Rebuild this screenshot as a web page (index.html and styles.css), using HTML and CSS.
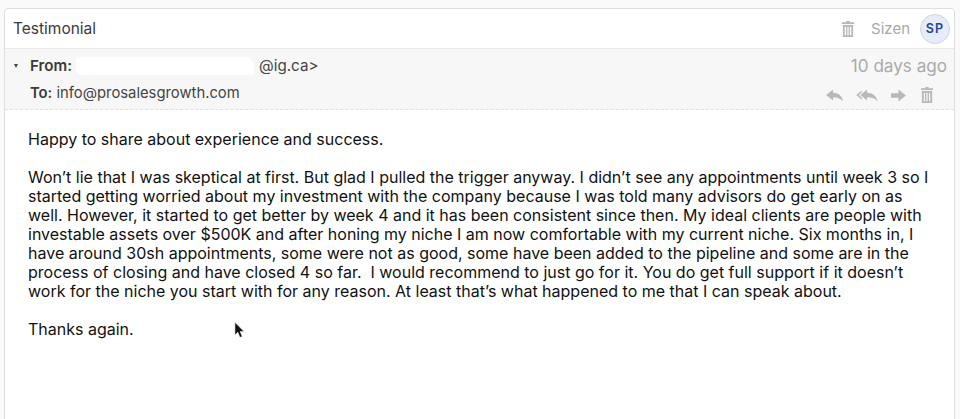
FILE: index.html
```html
<!DOCTYPE html>
<html lang="en">
<head>
<meta charset="utf-8">
<title>Testimonial</title>
<link rel="stylesheet" href="styles.css">
</head>
<body>
<main class="card">
  <header class="subject">
    <h1 class="subject-title">Testimonial</h1>
    <div class="subject-side">
      <svg class="icon icon-trash-lg" viewBox="0 0 14 18" preserveAspectRatio="none"><use href="#trash"/></svg>
      <span class="owner">Sizen</span>
      <span class="avatar">SP</span>
    </div>
  </header>
  <section class="meta">
    <div class="meta-row meta-from">
      <div class="from">
        <span class="caret"></span>
        <b class="label">From:</b>
        <span class="redacted"></span>
        <span class="address">@ig.ca&gt;</span>
      </div>
      <span class="age">10 days ago</span>
    </div>
    <div class="meta-row meta-to">
      <div class="to"><b class="label">To:</b> info@prosalesgrowth.com</div>
      <div class="actions">
        <svg class="icon icon-reply" viewBox="0 0 18 14"><path d="M0 6.500 7.500 0.500V4C13 4 17.500 7 18 13.500 15.500 10.500 12 9 7.500 9V12.500Z"/></svg>
        <svg class="icon icon-replyall" viewBox="0 0 23 14"><path d="M0 6.500 6 1.500V3.400L2.800 6.500 6 9.600V11.500Z"/><path d="M4.500 6.500 11.500 0.500V4C17 4 22 7 23 13.500 20.500 10.500 16.500 9 11.500 9V12.500Z"/></svg>
        <svg class="icon icon-forward" viewBox="0 0 16 14"><path d="M0 4.500H8V0.500L16 7 8 13.500V9.500H0Z"/></svg>
        <svg class="icon icon-trash" viewBox="0 0 14 18" preserveAspectRatio="none"><use href="#trash"/></svg>
      </div>
    </div>
  </section>
  <article class="body">
    <p>Happy to share about experience and success.</p>
    <p>Won’t lie that I was skeptical at first. But glad I pulled the trigger anyway. I didn’t see any appointments until week 3 so I<br>
    started getting worried about my investment with the company because I was told many advisors do get early on as<br>
    well. However, it started to get better by week 4 and it has been consistent since then. My ideal clients are people with<br>
    investable assets over $500K and after honing my niche I am now comfortable with my current niche. Six months in, I<br>
    have around 30sh appointments, some were not as good, some have been added to the pipeline and some are in the<br>
    process of closing and have closed 4 so far.&nbsp; I would recommend to just go for it. You do get full support if it doesn’t<br>
    work for the niche you start with for any reason. At least that’s what happened to me that I can speak about.</p>
    <p>Thanks again.</p>
  </article>
  <svg class="cursor" viewBox="0 0 12 20"><path d="M1 1V15L4.200 12 6.500 17.500 9 16.500 6.700 11.200H11Z"/></svg>
</main>
<svg class="defs" aria-hidden="true"><defs>
  <g id="trash"><path fill-rule="evenodd" d="M5 0H9V1.500H14V3.500H0V1.500H5ZM1 4.500H13V18H1ZM3.200 6.500V16H4.700V6.500ZM6.250 6.500V16H7.750V6.500ZM9.300 6.500V16H10.800V6.500Z"/></g>
</defs></svg>
</body>
</html>
```
FILE: styles.css
```css
html, body { margin: 0; height: 419px; overflow: hidden; background: #f9f9f9; }
body { padding: 8px 5px 0 4px; box-sizing: border-box; font-family: Inter, "Liberation Sans", sans-serif; color: #111; }
.defs { display: none; }
.card { position: relative; height: 420px; box-sizing: border-box; background: #fff; border: 1px solid #dedede; border-radius: 4px; }
.subject { height: 39px; display: flex; align-items: center; justify-content: space-between; padding: 0 4px 0 8px; border-bottom: 1px solid #e8e8e8; }
.subject-title { margin: 0; font-size: 15.500px; font-weight: 400; color: #3a3a3a; }
.subject-side { display: flex; align-items: center; }
.icon { fill: #b8b8b8; display: block; }
.icon-trash-lg { width: 12px; height: 16px; margin-right: 17px; }
.owner { font-size: 15px; color: #a8a8a8; margin-right: 10px; }
.avatar { width: 30px; height: 30px; border-radius: 50%; background: #e6ecf8; border: 1px solid #ccd4e4; box-sizing: border-box; display: flex; align-items: center; justify-content: center; color: #23468f; font-size: 12.500px; font-weight: 600; letter-spacing: 1.200px; }
.meta { height: 61px; box-sizing: border-box; background: #f7f7f7; border-bottom: 1px dashed #e2e2e2; padding: 5px 7px 0 9px; color: #444; }
.meta-row { display: flex; justify-content: space-between; }
.meta-from { height: 23px; align-items: center; }
.meta-to { margin-top: 7px; align-items: flex-start; }
.from { display: flex; align-items: center; font-size: 15.200px; }
.caret { width: 0; height: 0; border-left: 2.500px solid transparent; border-right: 2.500px solid transparent; border-top: 4px solid #444; margin-right: 12px; }
.label { font-weight: 600; color: #3a3a3a; }
.redacted { width: 178px; height: 18px; margin: 0 5px 0 -1px; background: #fff; border-radius: 4px 9px 3px 6px; }
.from .label { margin-right: 5px; }
.age { font-size: 17.100px; color: #aaa; }
.to { font-size: 14.800px; padding-left: 16px; }
.actions { display: flex; align-items: center; padding: 3px 14px 0 0; }
.icon-reply { width: 17px; height: 13px; margin-right: 13px; }
.icon-replyall { width: 22px; height: 13px; margin-right: 13px; }
.icon-forward { width: 15px; height: 13px; margin-right: 15px; }
.icon-trash { width: 12px; height: 16px; }
.body { padding: 20px 23px 0; font-size: 16px; line-height: 19px; color: #111; }
.body p { margin: 0 0 19px; white-space: nowrap; }
.cursor { position: absolute; left: 229px; top: 312px; width: 11px; height: 19px; fill: #111; stroke: #fff; stroke-width: 0.6; }
```
